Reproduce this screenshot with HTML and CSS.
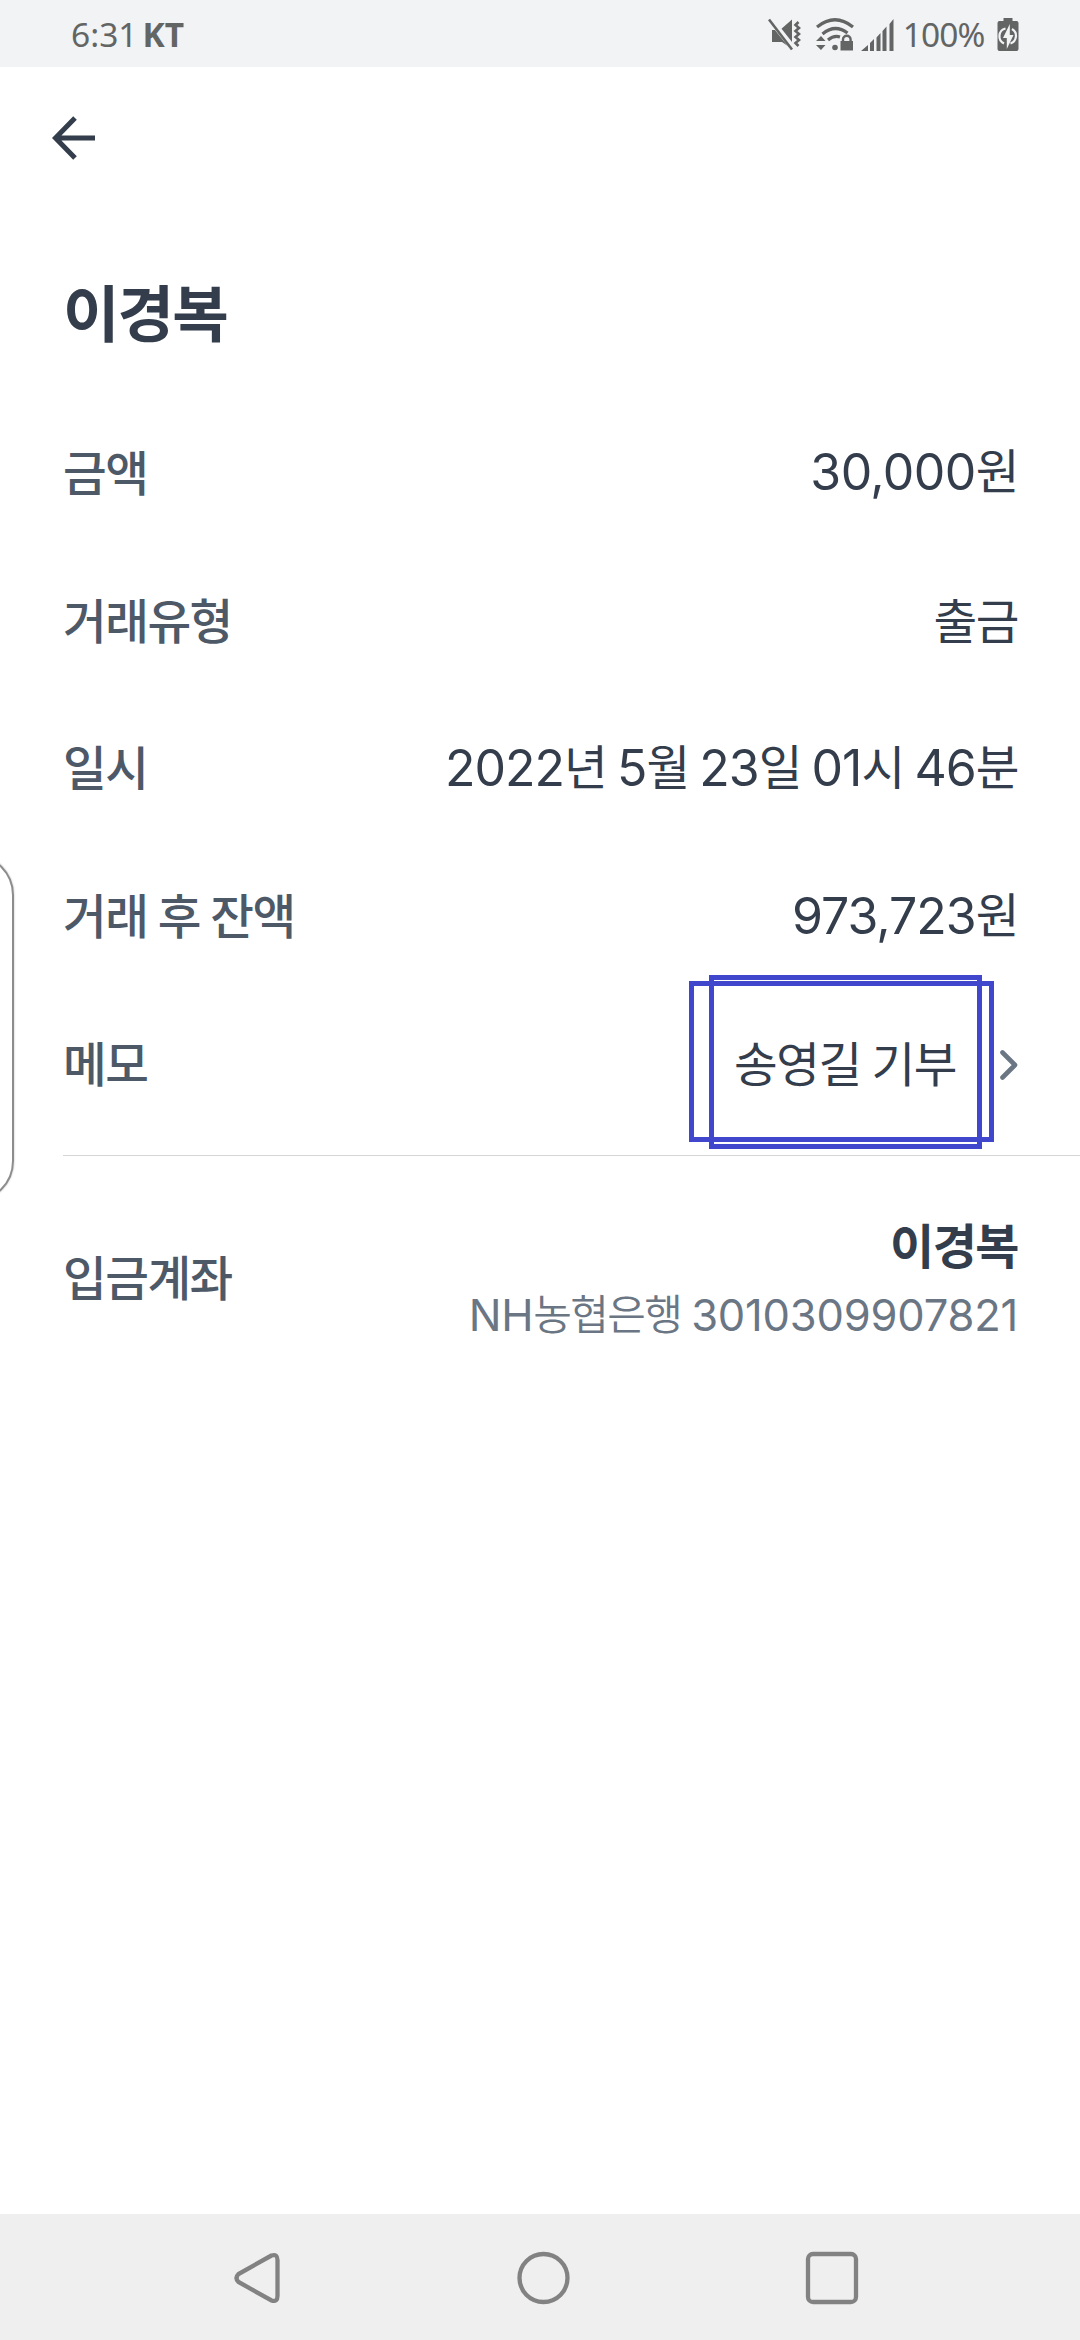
FILE: index.html
```html
<!DOCTYPE html>
<html lang="ko">
<head>
<meta charset="utf-8">
<title>거래 상세</title>
<link rel="stylesheet" href="styles.css">
</head>
<body>
<div class="screen">
  <header class="status">
    <div class="status-left"><span class="clock">6:31</span><b class="carrier">KT</b></div>
    <div class="status-right">
      <svg class="ic-mute" width="34" height="34" viewBox="0 0 34 34">
        <path fill="#636564" d="M4 12H12L24 1.500V31L14 24H4Z"/>
        <path d="M2 1L25 30" stroke="#f2f3f5" stroke-width="6"/>
        <path d="M1 1.500L24 31.500" stroke="#636564" stroke-width="2.600"/>
        <path d="M30.500 4l-3 3 3.500 3-3.500 3 3.500 3-3.500 3 3.500 3-3.500 3 3 3" fill="none" stroke="#636564" stroke-width="2.600"/>
      </svg>
      <svg class="ic-wifi" width="38" height="34" viewBox="0 0 38 34">
        <g fill="none" stroke="#636564" stroke-width="3.200">
          <path d="M1 9Q19-5.500 37 9"/><path d="M6.500 16Q19 5.500 31.500 15"/><path d="M12 22Q18 17 24 19"/>
        </g>
        <circle cx="19" cy="29.500" r="2.800" fill="#636564"/>
        <path fill="#636564" d="M0 23L5 18L9.500 23ZM0 27H9.500L5 32Z"/>
        <path fill="#636564" d="M24.500 23H37V32.500H24.500Z"/>
        <path d="M27 24V21.500a3.800 3.800 0 0 1 7.600 0V24" fill="none" stroke="#636564" stroke-width="2.400"/>
      </svg>
      <svg class="ic-signal" width="34" height="34" viewBox="0 0 34 34"><path fill="#636564" d="M0 33L7 27V33ZM9 25L13 21V33H9ZM15.500 19.500L19.500 15V33H15.500ZM21.500 13L25.500 8.500V33H21.500ZM28.500 6L32.500 1V33H28.500Z"/></svg>
      <span class="percent">100%</span>
      <svg class="ic-battery" width="22" height="34" viewBox="0 0 22 34">
        <path fill="#636564" d="M6.500 0H15.500V3H19.500Q21.500 3 21.500 5V31Q21.500 33 19.500 33H2.500Q.5 33 .5 31V5Q.5 3 2.500 3H6.500Z"/>
        <path d="M8.500 10.500A8 8 0 0 0 7 25.500M13.500 25.500A8 8 0 0 0 15 11" fill="none" stroke="#f2f3f5" stroke-width="2.200"/>
        <path fill="#f2f3f5" d="M12.800 6L6 20H9.800V31L16.500 17H12.800Z"/>
      </svg>
    </div>
  </header>

  <nav class="toolbar">
    <svg width="44" height="44" viewBox="0 0 44 44"><path d="M23 2L3.500 22L23 42M4 22H43" fill="none" stroke="#333d4b" stroke-width="5"/></svg>
  </nav>

  <main>
    <h1 class="title">이경복</h1>
    <dl class="rows">
      <div class="row"><dt>금액</dt><dd><span class="num amount">30,000</span>원</dd></div>
      <div class="row"><dt>거래유형</dt><dd>출금</dd></div>
      <div class="row"><dt>일시</dt><dd><span class="num">2022</span>년 <span class="num">5</span>월 <span class="num">23</span>일 <span class="num">01</span>시 <span class="num">46</span>분</dd></div>
      <div class="row"><dt>거래 후 잔액</dt><dd><span class="num">973,723</span>원</dd></div>
      <div class="row"><dt>메모</dt>
        <dd class="memo"><span>송영길 기부</span>
          <svg class="chevron" width="18" height="30" viewBox="0 0 18 30"><path d="M2.500 2.500L15 15L2.500 27.500" fill="none" stroke="#6b7684" stroke-width="4.600" stroke-linecap="round" stroke-linejoin="round"/></svg>
          <i class="mark mark-wide"></i><i class="mark mark-tall"></i>
        </dd></div>
    </dl>
    <section class="account">
      <h2 class="account-label">입금계좌</h2>
      <div class="account-info">
        <strong class="holder">이경복</strong>
        <span class="bank"><span class="num">NH</span>농협은행 <span class="num">3010309907821</span></span>
      </div>
    </section>
  </main>

  <footer class="navbar">
    <svg width="48" height="54" viewBox="0 0 48 54"><path d="M38.500 4.500L5.500 23Q1.500 27 5.500 31L38.500 49.500Q44.500 51.500 44.500 45V9Q44.500 2.500 38.500 4.500Z" fill="none" stroke="#828282" stroke-width="4.300"/></svg>
    <svg width="54" height="54" viewBox="0 0 54 54"><circle cx="27.500" cy="27" r="24" fill="none" stroke="#828282" stroke-width="4.300"/></svg>
    <svg width="54" height="54" viewBox="0 0 54 54"><rect x="3" y="3" width="48" height="48" rx="5" fill="none" stroke="#828282" stroke-width="4.300"/></svg>
  </footer>
  <div class="edge-handle"></div>
</div>
</body>
</html>
```
FILE: styles.css
```css
* { box-sizing: border-box; margin: 0; padding: 0; }
body { background: #fff; font-family: "Noto Sans CJK KR", sans-serif; color: #333d4b; }
.screen { position: relative; width: 1080px; height: 2340px; display: flex; flex-direction: column; overflow: hidden; }

.status { height: 67px; background: #f2f3f5; color: #636564; display: flex; justify-content: space-between; padding: 0 61px 0 71px; font-family: "Noto Sans", sans-serif; font-size: 33.500px; line-height: 67px; }
.status-left, .status-right { display: flex; align-items: center; height: 69px; }
.carrier { margin-left: 5px; }
.ic-wifi { margin-left: 14px; }
.ic-signal { margin-left: 7px; }
.percent { margin-left: 8px; letter-spacing: -0.900px; }
.ic-battery { margin-left: 12.500px; }
.status svg { flex: none; }

.toolbar { height: 143px; padding: 49px 0 0 52px; }

main { flex: 1; }
.title { height: 187px; padding: 55px 0 0 63px; font-size: 61.500px; line-height: 92px; font-weight: 700; letter-spacing: -2px; white-space: nowrap; }
.rows { padding-bottom: 19px; }
.row { height: 147.750px; padding: 0 62px 0 63px; display: flex; align-items: center; justify-content: space-between; }
.row dt, .account-label { font-size: 47.500px; line-height: 70px; font-weight: 500; color: #4e5968; letter-spacing: -1.500px; word-spacing: -1.500px; white-space: nowrap; }
.row dd { font-size: 47.500px; line-height: 70px; letter-spacing: -1.400px; word-spacing: -1.300px; white-space: nowrap; }
.num { font-family: Inter, sans-serif; font-size: 50px; letter-spacing: -1px; vertical-align: -1px; }
.amount { letter-spacing: -0.600px; }
.row .memo { position: relative; display: flex; align-items: center; gap: 44px; }
.chevron { margin-top: 7px; }
.mark { position: absolute; border: 5px solid #4047cd; }
.mark-wide { right: 24px; top: -46px; width: 305px; height: 161px; }
.mark-tall { right: 36px; top: -52px; width: 273px; height: 174px; }

.account { margin-left: 63px; padding: 0 62px 0 0; border-top: 1px solid #d4d6d8; height: 246px; display: flex; align-items: center; justify-content: space-between; }
.account-label { padding-bottom: 5px; }
.account-info { display: flex; flex-direction: column; align-items: flex-end; }
.holder { font-size: 48px; line-height: 70px; font-weight: 700; letter-spacing: -1.500px; }
.bank { font-size: 42px; line-height: 68px; font-weight: 350; color: #6b7684; letter-spacing: -1.700px; white-space: nowrap; }
.bank .num { font-size: 43.500px; font-weight: 400; letter-spacing: -0.200px; vertical-align: -1px; }

.navbar { height: 126px; background: #efefef; padding: 2px 221px 0 233px; display: flex; align-items: center; justify-content: space-between; }

.edge-handle { position: absolute; left: -106px; top: 854px; width: 120px; height: 348px; border: 2px solid #8c8c8c; border-radius: 41px; box-shadow: 0 0 2px rgba(0,0,0,.3); }
```
